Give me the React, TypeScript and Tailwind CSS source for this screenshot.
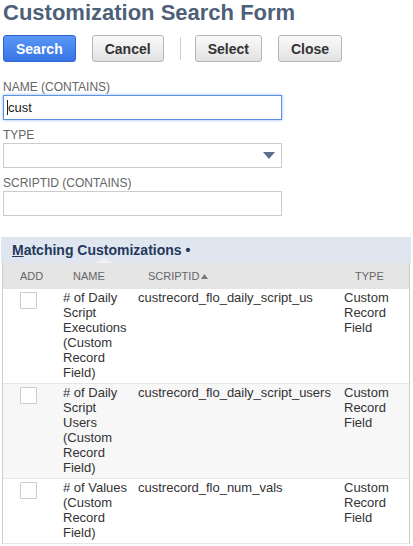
import React from "react";

const rows = [
  { name: "# of Daily Script Executions (Custom Record Field)", id: "custrecord_flo_daily_script_us", type: "Custom Record Field" },
  { name: "# of Daily Script Users (Custom Record Field)", id: "custrecord_flo_daily_script_users", type: "Custom Record Field" },
  { name: "# of Values (Custom Record Field)", id: "custrecord_flo_num_vals", type: "Custom Record Field" },
];

function Btn({ label, primary }: { label: string; primary?: boolean }) {
  return primary ? (
    <button className="h-[27px] px-3 rounded-[3px] border border-[#2f63d6] bg-gradient-to-b from-[#5a97f6] to-[#3774e6] text-white text-[14px] font-bold leading-none">
      {label}
    </button>
  ) : (
    <button className="h-[27px] px-3 rounded-[3px] border border-[#b5b5b5] bg-gradient-to-b from-[#fafafa] to-[#e2e2e2] text-[#333] text-[14px] font-bold leading-none">
      {label}
    </button>
  );
}

export default function App() {
  return (
    <div className="w-[413px] h-[546px] overflow-hidden bg-white font-['Liberation_Sans',Arial,sans-serif]">
      <div className="pl-[3px]">
        <h1 className="text-[22px] leading-[26px] font-bold text-[#4d5f79] m-0">Customization Search Form</h1>
        <div className="mt-[9px] flex items-center">
          <Btn label="Search" primary />
          <div className="ml-4">
            <Btn label="Cancel" />
          </div>
          <div className="ml-4 w-px h-[23px] bg-[#cfcfcf]" />
          <div className="ml-[14px]">
            <Btn label="Select" />
          </div>
          <div className="ml-4">
            <Btn label="Close" />
          </div>
        </div>

        <div className="mt-[18px] flex flex-col gap-2 w-[279px]">
          <div>
            <div className="text-[12px] leading-[15px] text-[#666]">NAME (CONTAINS)</div>
            <div className="h-[25px] border border-[#5d93e6] shadow-[0_0_3px_#8db6f2] bg-white flex items-center pl-[3px] text-[13px] text-[#222]">
              <span className="w-px h-[15px] bg-[#222]" />
              <span>cust</span>
            </div>
          </div>
          <div>
            <div className="text-[12px] leading-[15px] text-[#666]">TYPE</div>
            <div className="h-[25px] border border-[#cccccc] bg-white flex items-center justify-end pr-[6px]">
              <svg width="12" height="7" viewBox="0 0 12 7">
                <path d="M0 0 H12 L6 7 Z" fill="#5c6e8a" />
              </svg>
            </div>
          </div>
          <div>
            <div className="text-[12px] leading-[15px] text-[#666]">SCRIPTID (CONTAINS)</div>
            <div className="h-[25px] border border-[#cccccc] bg-white" />
          </div>
        </div>
      </div>

      <div className="mt-[21px] ml-px w-[410px]">
        <div className="h-[26px] bg-[#e0e6ef] flex items-center pl-[11px] relative">
          <span className="text-[14px] font-bold text-[#24385b]">
            <span className="underline">M</span>atching Customizations •
          </span>
          <div className="absolute left-[95px] bottom-0 w-0 h-0 border-l-[8px] border-r-[8px] border-b-[5px] border-l-transparent border-r-transparent border-b-[#f2f2f2]" />
        </div>
        <div className="ml-px w-[408px] border-l border-r border-[#cccccc]">
          <div className="h-[26px] bg-[#e5e5e5] flex items-center text-[11px] text-[#666] uppercase">
            <div className="w-[60px] pl-[17px]">ADD</div>
            <div className="w-[75px] pl-[10px]">NAME</div>
            <div className="w-[206px] pl-[10px] flex items-center gap-[2px]">
              SCRIPTID
              <svg width="7" height="5" viewBox="0 0 7 5">
                <path d="M0 5 L3.5 0 L7 5 Z" fill="#777" />
              </svg>
            </div>
            <div className="flex-1 pl-[11px]">TYPE</div>
          </div>
          {rows.map((r, i) => (
            <div
              key={r.id}
              className={`flex text-[13px] leading-[15px] text-[#333] pt-[1px] pb-[3px] border-b border-[#e6e6e6] ${i === 1 ? "bg-[#f7f7f7]" : "bg-white"}`}
            >
              <div className="w-[60px] pl-[17px] pt-[2px]">
                <div className="w-[17px] h-[17px] border border-[#cccccc] bg-white rounded-[1px]" />
              </div>
              <div className="w-[75px]">
                <div className="w-[70px]">{r.name}</div>
              </div>
              <div className="w-[206px]">{r.id}</div>
              <div className="flex-1 w-[60px]">{r.type}</div>
            </div>
          ))}
        </div>
      </div>
    </div>
  );
}
